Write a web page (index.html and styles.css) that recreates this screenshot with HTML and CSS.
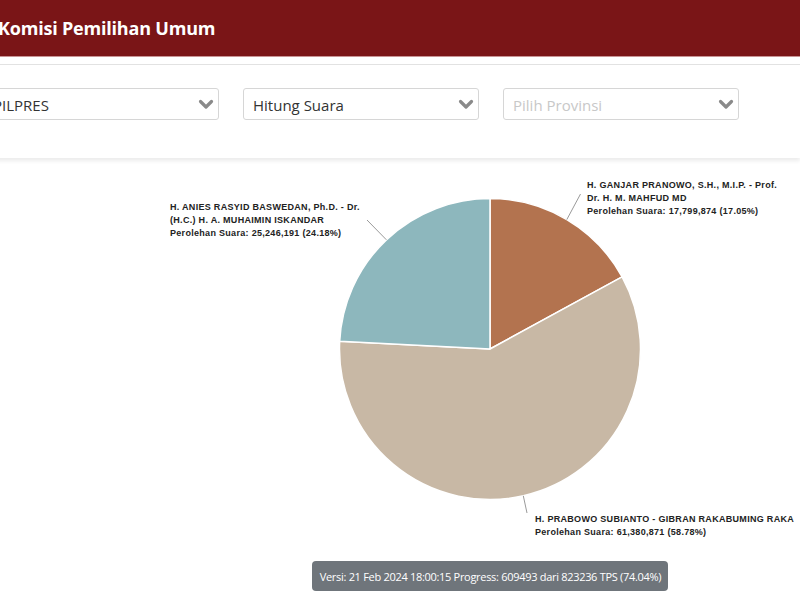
FILE: index.html
```html
<!DOCTYPE html>
<html lang="id">
<head>
<meta charset="utf-8">
<title>Komisi Pemilihan Umum</title>
<link rel="stylesheet" href="styles.css">
</head>
<body>
<header class="topbar">
  <h1 class="brand">Komisi Pemilihan Umum</h1>
</header>
<div class="subline"></div>
<section class="filters">
  <div class="select select-first">
    <span class="select-text">PILPRES</span>
    <svg class="chev" viewBox="0 0 16 11" width="16" height="11"><path d="M2.5 2.5 L8 8 L13.5 2.5" fill="none" stroke="#8a8a8a" stroke-width="3.2" stroke-linecap="round" stroke-linejoin="round"/></svg>
  </div>
  <div class="select">
    <span class="select-text">Hitung Suara</span>
    <svg class="chev" viewBox="0 0 16 11" width="16" height="11"><path d="M2.5 2.5 L8 8 L13.5 2.5" fill="none" stroke="#8a8a8a" stroke-width="3.2" stroke-linecap="round" stroke-linejoin="round"/></svg>
  </div>
  <div class="select">
    <span class="select-text placeholder">Pilih Provinsi</span>
    <svg class="chev" viewBox="0 0 16 11" width="16" height="11"><path d="M2.5 2.5 L8 8 L13.5 2.5" fill="none" stroke="#8a8a8a" stroke-width="3.2" stroke-linecap="round" stroke-linejoin="round"/></svg>
  </div>
</section>
<main class="chart-area">
  <svg class="pie" width="980" height="400" viewBox="0 0 980 400">
    <g stroke="#ffffff" stroke-width="1.5" stroke-linejoin="round">
      <path d="M490 191 L490 40.5 A150.5 150.5 0 0 1 622.1 118.9 Z" fill="#b3734f"/>
      <path d="M490 191 L622.1 118.9 A150.5 150.5 0 1 1 339.7 183.15 Z" fill="#c8b8a5"/>
      <path d="M490 191 L339.7 183.15 A150.5 150.5 0 0 1 490 40.5 Z" fill="#8db7bd"/>
    </g>
    <g stroke="#9a9a9a" stroke-width="1">
      <line x1="386.4" y1="81.8" x2="367" y2="62"/>
      <line x1="566.8" y1="61.6" x2="580.5" y2="36"/>
      <line x1="523.3" y1="337.8" x2="527" y2="355"/>
    </g>
    <g class="lbl">
      <text x="170" y="52">H. ANIES RASYID BASWEDAN, Ph.D. - Dr.</text>
      <text x="170" y="65">(H.C.) H. A. MUHAIMIN ISKANDAR</text>
      <text x="170" y="78">Perolehan Suara: 25,246,191 (24.18%)</text>
      <text x="587" y="30">H. GANJAR PRANOWO, S.H., M.I.P. - Prof.</text>
      <text x="587" y="43">Dr. H. M. MAHFUD MD</text>
      <text x="587" y="56">Perolehan Suara: 17,799,874 (17.05%)</text>
      <text x="535" y="364">H. PRABOWO SUBIANTO - GIBRAN RAKABUMING RAKA</text>
      <text x="535" y="377">Perolehan Suara: 61,380,871 (58.78%)</text>
    </g>
  </svg>
  <div class="badge">Versi: 21 Feb 2024 18:00:15 Progress: 609493 dari 823236 TPS (74.04%)</div>
</main>
</body>
</html>
```

FILE: styles.css
```css
html, body {
  margin: 0;
  padding: 0;
  background: #ffffff;
  overflow: hidden;
  width: 800px;
  height: 600px;
}
body {
  font-family: "Open Sans", "Noto Sans", sans-serif;
  color: #333;
}
.topbar {
  height: 57px;
  box-sizing: border-box;
  background: #7a1517;
  display: flex;
  align-items: center;
  border-bottom: 1px solid #c99495;
}
.brand {
  margin: 0 0 0 -2px;
  font-size: 18px;
  font-weight: 700;
  color: #ffffff;
  letter-spacing: -0.2px;
}
.subline {
  height: 7px;
  background: #ffffff;
}
.filters {
  height: 94px;
  border-top: 1px solid #e2e2e2;
  box-shadow: 0 3px 4px rgba(0,0,0,0.08);
  display: flex;
  align-items: flex-start;
  gap: 24px;
  padding-top: 23px;
  margin-left: -17px;
  box-sizing: border-box;
  position: relative;
  z-index: 1;
}
.select {
  width: 236px;
  height: 32px;
  border: 1px solid #d6d6d6;
  border-radius: 3px;
  box-sizing: border-box;
  display: flex;
  align-items: center;
  justify-content: space-between;
  padding: 1px 4px 0 9px;
  background: #fff;
}
.select-text {
  font-size: 15px;
  color: #333;
}
.placeholder {
  color: #c8c8c8;
}
.chart-area {
  width: 980px;
  display: flex;
  flex-direction: column;
  align-items: center;
}
.pie {
  display: block;
}
.lbl text {
  font-family: "Liberation Sans", Arial, sans-serif;
  font-weight: 700;
  font-size: 9px;
  fill: #222;
  letter-spacing: 0.3px;
}
.badge {
  margin-top: 3px;
  height: 30px;
  padding: 0 7px 0 8px;
  background: #6f757b;
  color: #ffffff;
  border-radius: 4px;
  font-size: 11px;
  letter-spacing: -0.3px;
  display: flex;
  align-items: center;
  white-space: nowrap;
}
```
